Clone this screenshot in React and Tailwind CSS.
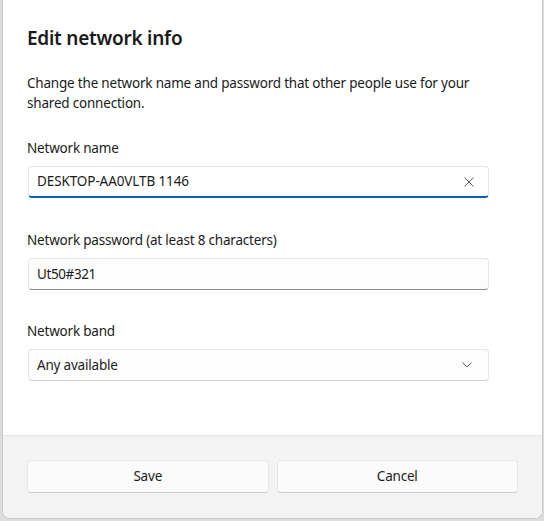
import React from "react";

function Label({ children, className = "" }) {
  return (
    <div className={`text-[13.5px] leading-[20px] tracking-[-0.2px] text-[#1b1b1b] ${className}`}>{children}</div>
  );
}

export default function App() {
  return (
    <div className="w-[544px] h-[521px] bg-[#dcdcdc] overflow-hidden font-['Segoe_UI','Noto_Sans',sans-serif]">
      <div className="ml-[2px] w-[541px] h-[519px] bg-white border-l border-r border-b border-[#c9c9c9] rounded-b-[8px] flex flex-col overflow-hidden">
        <div className="flex-1 px-6 pt-6">
          <div className="text-[19px] leading-[28px] font-semibold tracking-[-0.25px] text-[#1b1b1b]">Edit network info</div>
          <Label className="mt-[21px] max-w-[450px]">
            Change the network name and password that other people use for your shared connection.
          </Label>
          <Label className="mt-[25px]">Network name</Label>
          <div className="mt-2 w-[461px] h-[32px] ml-px rounded-[4px] bg-white border border-[#e5e5e5] border-b-2 border-b-[#005fb8] flex items-center pl-[8px] pr-[14px]">
            <span className="flex-1 text-[13.5px] tracking-[-0.1px] text-[#1b1b1b]">DESKTOP-AA0VLTB 1146</span>
            <svg width="10" height="10" viewBox="0 0 10 10" className="text-[#5f5f5f]">
              <path d="M0.5 0.5 L9.5 9.5 M9.5 0.5 L0.5 9.5" stroke="currentColor" strokeWidth="1" fill="none" />
            </svg>
          </div>
          <Label className="mt-[32px]">Network password (at least 8 characters)</Label>
          <div className="mt-2 w-[461px] h-[32px] ml-px rounded-[4px] bg-[#fdfdfd] border border-[#e5e5e5] border-b-[#8a8a8a] flex items-center pl-[8px]">
            <span className="text-[13.5px] tracking-[-0.4px] text-[#1b1b1b]">Ut50#321</span>
          </div>
          <Label className="mt-[31px]">Network band</Label>
          <div className="mt-2 w-[461px] h-[32px] ml-px rounded-[4px] bg-[#fdfdfd] border border-[#e5e5e5] border-b-[#d0d0d0] flex items-center pl-[8px] pr-[16px]">
            <span className="flex-1 text-[13.5px] tracking-[-0.2px] text-[#1b1b1b]">Any available</span>
            <svg width="10" height="6" viewBox="0 0 10 6" className="text-[#5f5f5f]">
              <path d="M0.5 0.5 L5 5 L9.5 0.5" stroke="currentColor" strokeWidth="1" fill="none" />
            </svg>
          </div>
        </div>
        <div className="h-[83px] bg-[#f3f3f3] border-t border-[#e5e5e5] px-6 pt-6 flex gap-2">
          <button className="flex-1 h-[33px] rounded-[4px] bg-[#fbfbfb] border border-[#e5e5e5] border-b-[#cccccc] text-[13.5px] tracking-[-0.2px] text-[#1b1b1b]">Save</button>
          <button className="flex-1 h-[33px] rounded-[4px] bg-[#fbfbfb] border border-[#e5e5e5] border-b-[#cccccc] text-[13.5px] tracking-[-0.2px] text-[#1b1b1b]">Cancel</button>
        </div>
      </div>
    </div>
  );
}
